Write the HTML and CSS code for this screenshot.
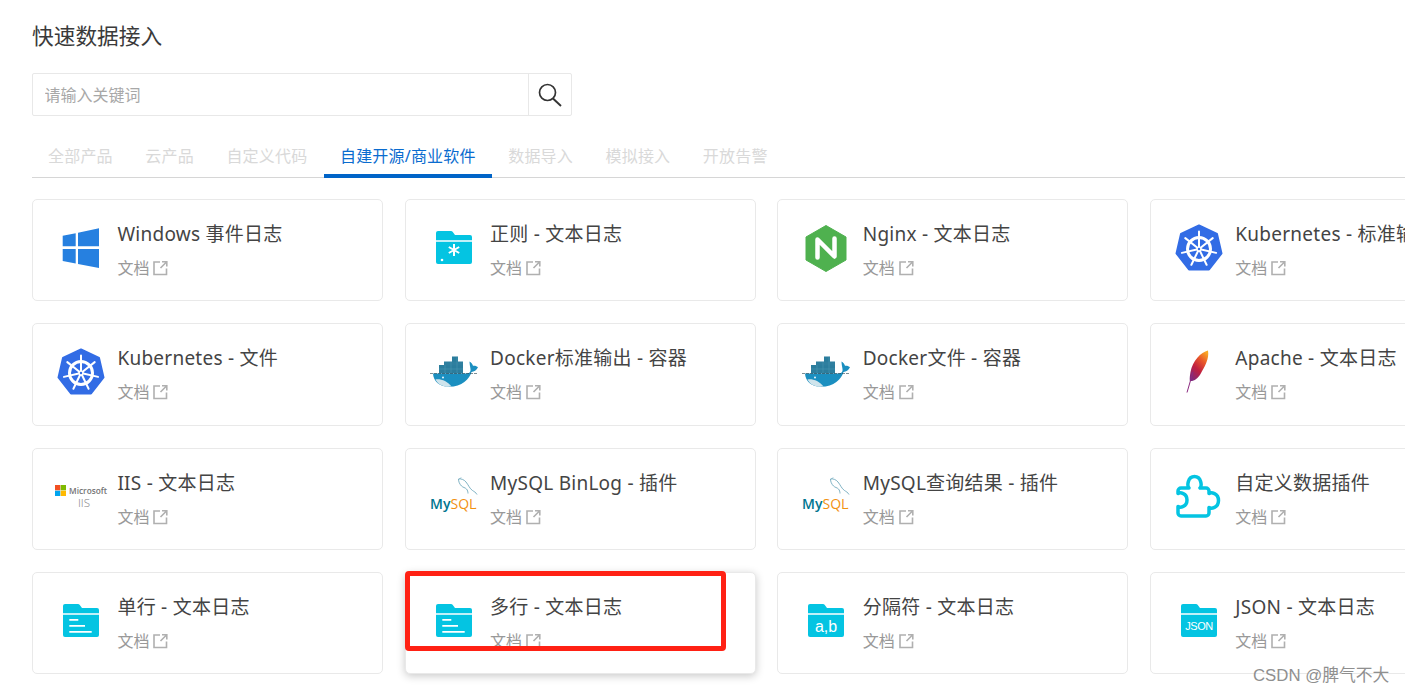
FILE: index.html
```html
<!DOCTYPE html>
<html lang="zh-CN">
<head>
<meta charset="utf-8">
<title>快速数据接入</title>
<link rel="stylesheet" href="styles.css">
</head>
<body>
<svg class="defs" width="0" height="0" aria-hidden="true">
  <defs>
    <linearGradient id="feather" x1="0.8" y1="0" x2="0.2" y2="1">
      <stop offset="0" stop-color="#f9a825"/>
      <stop offset="0.3" stop-color="#e8572a"/>
      <stop offset="0.62" stop-color="#c01f3f"/>
      <stop offset="1" stop-color="#7e2a7d"/>
    </linearGradient>
    <symbol id="ext" viewBox="0 0 16 16">
      <path d="M8 2H2V14.500H14.500V8.500" fill="none" stroke="#b0b0b0" stroke-width="1.600"/>
      <path d="M8.500 8L14 2.500M10 1.800H14.800V6.500" fill="none" stroke="#b0b0b0" stroke-width="1.600"/>
    </symbol>
    <symbol id="folder-top" viewBox="0 0 48 48">
      <path d="M6 9a2 2 0 0 1 2-2H21a2 2 0 0 1 1.600.8L25 11H40a2 2 0 0 1 2 2V16.300H6Z" fill="#04c4e2"/>
      <path d="M6 17.700H42V38a2 2 0 0 1-2 2H8a2 2 0 0 1-2-2Z" fill="#04c4e2"/>
    </symbol>
    <symbol id="k8s" viewBox="0 0 48 48">
      <path d="M24 1.500L42 10L46.500 29.500L34 45.500H14L1.500 29.500L6 10Z" fill="#326ce5" stroke="#326ce5" stroke-width="2" stroke-linejoin="round"/>
      <circle cx="24" cy="25" r="11.500" fill="none" stroke="#fff" stroke-width="3"/>
      <path d="M24 25V7.500M24 25L37.700 14.100M24 25L41.100 28.900M24 25L31.600 40.800M24 25L16.400 40.800M24 25L6.900 28.900M24 25L10.300 14.100" fill="none" stroke="#fff" stroke-width="2" stroke-linecap="round"/>
      <circle cx="24" cy="25" r="2.600" fill="#fff"/>
      <circle cx="24" cy="25" r="1.200" fill="#326ce5"/>
    </symbol>
    <symbol id="docker" viewBox="0 0 48 48">
      <rect x="9" y="17" width="24" height="8.500" fill="#2b7d9d"/>
      <rect x="14" y="13.500" width="19" height="4" fill="#2f7f9f"/>
      <rect x="22" y="8.500" width="6" height="5.500" fill="#2b7d9d"/>
      <path d="M9 21H33M15 17V25M21 14V25M27 9V25" stroke="#4f9ab5" stroke-width="0.500" fill="none"/>
      <path d="M3 25.500H36C38.500 25.500 41 24.800 40.500 21C40 18 39.500 15.500 39.500 13.500C41 14.500 42.500 16 43 17.800C45 17.500 47 18.200 48 19.200C46.500 22.500 44 23.600 41.500 24C39.500 31 32 38.800 19 38.800C9 38.800 3.500 33 3 25.500Z" fill="#1b8fc0"/>
      <path d="M5.500 31.500C8 31 12 31.500 15 33C17.500 34.500 20 36.500 21.500 38.600C13 39.500 8 36.500 5.500 31.500Z" fill="#cfe4ec"/>
      <path d="M0 25.500H48" stroke="#23414f" stroke-width="0.600" stroke-dasharray="3 1" fill="none"/>
      <circle cx="13" cy="29.500" r="0.900" fill="#fff"/>
    </symbol>
    <symbol id="mysql" viewBox="0 0 48 48">
      <path d="M28.500 6C31 5.500 34 6.500 36 9C38.500 12 39.500 15.500 42.500 17.500C44 18.500 46 19.500 47 21.500M28.500 6C28.500 8.500 29.500 11 31.500 13C33 14.500 35 14.500 36.500 16C37.500 17 38 19 38 20.500M29.500 6L31 4.500" fill="none" stroke="#5f9fb5" stroke-width="0.800"/>
      <text class="my" x="0" y="36">My</text>
      <text class="sql" x="20.500" y="36">SQL</text>
      <text class="sql-dot" x="44.500" y="36">.</text>
    </symbol>
  </defs>
</svg>

<main class="page">
  <h1 class="heading">快速数据接入</h1>

  <div class="search">
    <input class="search-input" type="text" placeholder="请输入关键词">
    <button class="search-btn" type="button" aria-label="搜索">
      <svg width="24" height="24" viewBox="0 0 24 24"><circle cx="9.500" cy="9.500" r="8" fill="none" stroke="#333" stroke-width="1.700"/><path d="M15 15.500L23 23" stroke="#333" stroke-width="1.900" fill="none"/></svg>
    </button>
  </div>

  <nav class="tabs">
    <a class="tab">全部产品</a>
    <a class="tab">云产品</a>
    <a class="tab">自定义代码</a>
    <a class="tab tab-active">自建开源/商业软件</a>
    <a class="tab">数据导入</a>
    <a class="tab">模拟接入</a>
    <a class="tab">开放告警</a>
  </nav>

  <section class="grid">
    <article class="card">
      <svg class="icon" viewBox="0 0 48 48"><path d="M5.700 11.700L18.700 9.300V22.300H5.700ZM21 8.700L42 4.300V22.300H21ZM5.700 25H18.700V39.500L5.700 37ZM21 25H42V44L21 40Z" fill="#2680e0"/></svg>
      <div class="info"><div class="name">Windows 事件日志</div><a class="doc">文档<svg class="ext"><use href="#ext"/></svg></a></div>
    </article>
    <article class="card">
      <svg class="icon"><use href="#folder-top"/><path d="M24 20V32M18.800 23L29.200 29M18.800 29L29.200 23" stroke="#fff" stroke-width="2" fill="none"/><circle cx="12" cy="36" r="1.300" fill="#fff"/></svg>
      <div class="info"><div class="name">正则 - 文本日志</div><a class="doc">文档<svg class="ext"><use href="#ext"/></svg></a></div>
    </article>
    <article class="card">
      <svg class="icon" viewBox="0 0 48 48"><path d="M24 1.500L44 13V36L24 47.500L4 36V13Z" fill="#4fb14f" stroke="#4fb14f" stroke-width="1" stroke-linejoin="round"/><path d="M15.500 33.500V15.500L32.500 32.500V14.500" fill="none" stroke="#fff" stroke-width="4.500" stroke-linecap="round" stroke-linejoin="round"/></svg>
      <div class="info"><div class="name">Nginx - 文本日志</div><a class="doc">文档<svg class="ext"><use href="#ext"/></svg></a></div>
    </article>
    <article class="card">
      <svg class="icon"><use href="#k8s"/></svg>
      <div class="info"><div class="name">Kubernetes - 标准输出</div><a class="doc">文档<svg class="ext"><use href="#ext"/></svg></a></div>
    </article>

    <article class="card">
      <svg class="icon"><use href="#k8s"/></svg>
      <div class="info"><div class="name">Kubernetes - 文件</div><a class="doc">文档<svg class="ext"><use href="#ext"/></svg></a></div>
    </article>
    <article class="card">
      <svg class="icon"><use href="#docker"/></svg>
      <div class="info"><div class="name">Docker标准输出 - 容器</div><a class="doc">文档<svg class="ext"><use href="#ext"/></svg></a></div>
    </article>
    <article class="card">
      <svg class="icon"><use href="#docker"/></svg>
      <div class="info"><div class="name">Docker文件 - 容器</div><a class="doc">文档<svg class="ext"><use href="#ext"/></svg></a></div>
    </article>
    <article class="card">
      <svg class="icon" viewBox="0 0 48 48"><path d="M33 2.500C26 4 17.500 13 15.500 24C15 27 14.500 30 14.800 33C19 33.500 23 30.500 25.500 26C29.500 19 34.500 11 33 2.500Z" fill="url(#feather)"/><path d="M18 24L12 44.500" stroke="#8b2a80" stroke-width="1" fill="none"/></svg>
      <div class="info"><div class="name">Apache - 文本日志</div><a class="doc">文档<svg class="ext"><use href="#ext"/></svg></a></div>
    </article>

    <article class="card">
      <svg class="icon" viewBox="0 0 48 48">
        <rect x="-2" y="12" width="5.300" height="5.300" fill="#f25022"/><rect x="3.700" y="12" width="5.300" height="5.300" fill="#7fba00"/>
        <rect x="-2" y="17.700" width="5.300" height="5.300" fill="#00a4ef"/><rect x="3.700" y="17.700" width="5.300" height="5.300" fill="#ffb900"/>
        <text class="ms" x="12" y="20.500">Microsoft</text>
        <text class="iis" x="27" y="33.500" text-anchor="middle">IIS</text>
      </svg>
      <div class="info"><div class="name">IIS - 文本日志</div><a class="doc">文档<svg class="ext"><use href="#ext"/></svg></a></div>
    </article>
    <article class="card">
      <svg class="icon"><use href="#mysql"/></svg>
      <div class="info"><div class="name">MySQL BinLog - 插件</div><a class="doc">文档<svg class="ext"><use href="#ext"/></svg></a></div>
    </article>
    <article class="card">
      <svg class="icon"><use href="#mysql"/></svg>
      <div class="info"><div class="name">MySQL查询结果 - 插件</div><a class="doc">文档<svg class="ext"><use href="#ext"/></svg></a></div>
    </article>
    <article class="card">
      <svg class="icon" viewBox="0 0 48 48"><path d="M6 15H14C12 13 12.500 3.500 19.500 3.500C26.500 3.500 27 13 25 15H31A3 3 0 0 1 34 18V20.500C36 19 43.500 20 43.500 27.500C43.500 35 36 36 34 34.500V40A3 3 0 0 1 31 43H6A3 3 0 0 1 3 40V33.500C5 35 12 34 12 27C12 20 5 19 3 20.500V18A3 3 0 0 1 6 15Z" fill="none" stroke="#04c4e2" stroke-width="3.500" stroke-linejoin="round"/></svg>
      <div class="info"><div class="name">自定义数据插件</div><a class="doc">文档<svg class="ext"><use href="#ext"/></svg></a></div>
    </article>

    <article class="card">
      <svg class="icon"><use href="#folder-top"/><path d="M12.300 22.800H21.300M12.300 28.800H28M12.300 34.800H34.700" stroke="#fff" stroke-width="1.700" fill="none"/></svg>
      <div class="info"><div class="name">单行 - 文本日志</div><a class="doc">文档<svg class="ext"><use href="#ext"/></svg></a></div>
    </article>
    <article class="card card-hover">
      <svg class="icon"><use href="#folder-top"/><path d="M12.300 22.800H21.300M12.300 28.800H28M12.300 34.800H34.700" stroke="#fff" stroke-width="1.700" fill="none"/></svg>
      <div class="info"><div class="name">多行 - 文本日志</div><a class="doc">文档<svg class="ext"><use href="#ext"/></svg></a></div>
      <div class="mark"></div>
    </article>
    <article class="card">
      <svg class="icon"><use href="#folder-top"/><text class="abc" x="24" y="34.500" text-anchor="middle">a,b</text></svg>
      <div class="info"><div class="name">分隔符 - 文本日志</div><a class="doc">文档<svg class="ext"><use href="#ext"/></svg></a></div>
    </article>
    <article class="card">
      <svg class="icon"><use href="#folder-top"/><text class="json" x="24" y="33" text-anchor="middle">JSON</text></svg>
      <div class="info"><div class="name">JSON - 文本日志</div><a class="doc">文档<svg class="ext"><use href="#ext"/></svg></a></div>
    </article>
  </section>
</main>
<div class="watermark">CSDN @脾气不大</div>
</body>
</html>
```

FILE: styles.css
```css
html, body {
  margin: 0;
  height: 694px;
  overflow: hidden;
  background: #fff;
}
body {
  position: relative;
  font-family: "Noto Sans", "Noto Sans CJK SC", sans-serif;
  color: #333;
}
.defs {
  position: absolute;
}
.page {
  padding-left: 32px;
  width: 1373px;
}
.heading {
  margin: 0;
  padding-top: 21.500px;
  font-size: 21.700px;
  line-height: 28px;
  font-weight: 400;
  color: #3a3a3a;
}
.search {
  display: flex;
  width: 540px;
  height: 43px;
  margin-top: 23.500px;
  box-sizing: border-box;
  border: 1px solid #e8e8e8;
  border-radius: 2px;
}
.search-input {
  flex: 1;
  min-width: 0;
  padding: 0 11.500px 1px;
  border: 0;
  outline: 0;
  background: transparent;
  font: 16px "Noto Sans CJK SC", sans-serif;
  color: #333;
}
.search-input::placeholder {
  color: #a8a8a8;
  opacity: 1;
}
.search-btn {
  display: flex;
  align-items: center;
  justify-content: center;
  width: 43px;
  padding: 0;
  border: 0;
  border-left: 1px solid #e8e8e8;
  background: transparent;
}
.tabs {
  display: flex;
  gap: 0.5px;
  height: 42px;
  margin-top: 20px;
  box-sizing: border-box;
  border-bottom: 1px solid #d6d6d6;
}
.tab {
  box-sizing: border-box;
  height: 42px;
  padding: 0 16px;
  font-size: 16px;
  letter-spacing: 0.2px;
  line-height: 41px;
  color: #d9d9d9;
}
.tab-active {
  color: #0a6ccf;
  border-bottom: 4px solid #0064c8;
  border-radius: 3px 3px 0 0;
}
.grid {
  display: grid;
  grid-template-columns: repeat(4, minmax(0, 351px));
  grid-auto-rows: 102.400px;
  column-gap: 21.670px;
  row-gap: 21.900px;
  width: 1600px;
  margin-top: 21px;
}
.card {
  position: relative;
  display: flex;
  align-items: center;
  gap: 12.400px;
  box-sizing: border-box;
  padding-left: 24px;
  border: 1px solid #e9e9e9;
  border-radius: 5px;
  background: #fff;
}
.card-hover {
  box-shadow: 0 2px 8px rgba(0, 0, 0, 0.22);
}
.icon {
  flex: none;
  width: 48px;
  height: 48px;
  margin-bottom: 4px;
  overflow: visible;
}
.info {
  min-width: 0;
  white-space: nowrap;
}
.name {
  font-size: 19px;
  letter-spacing: 0.25px;
  line-height: 26px;
  margin-bottom: 10px;
  color: #444;
}
.doc {
  display: flex;
  align-items: center;
  gap: 3px;
  font-size: 16px;
  line-height: 22px;
  color: #999;
}
.ext {
  width: 16px;
  height: 16px;
}
.mark {
  position: absolute;
  left: -1px;
  top: -2px;
  width: 321px;
  height: 80px;
  box-sizing: border-box;
  border: 5px solid #ff2114;
  border-radius: 4px;
}
.my, .sql, .sql-dot {
  font-family: "Open Sans", sans-serif;
  font-size: 14px;
  font-weight: 600;
}
.my { fill: #00758f; }
.sql { fill: #f29111; font-weight: 400; font-size: 14px; }
.sql-dot { fill: #f29111; font-size: 8px; }
.ms {
  font-family: "Open Sans", sans-serif;
  font-size: 8.300px;
  font-weight: 600;
  fill: #737373;
}
.iis {
  font-family: "Open Sans", sans-serif;
  font-size: 11.500px;
  font-weight: 300;
  fill: #808080;
}
.abc {
  font-family: "Liberation Sans", sans-serif;
  font-size: 16px;
  fill: #fff;
}
.json {
  font-family: "Liberation Sans", sans-serif;
  font-size: 11px;
  letter-spacing: -0.5px;
  fill: #fff;
}
.watermark {
  position: absolute;
  left: 1253px;
  top: 664px;
  font-family: "Liberation Sans", "Noto Sans CJK SC", sans-serif;
  font-size: 16.800px;
  line-height: 24px;
  color: #8f8f8f;
  white-space: nowrap;
}
```
